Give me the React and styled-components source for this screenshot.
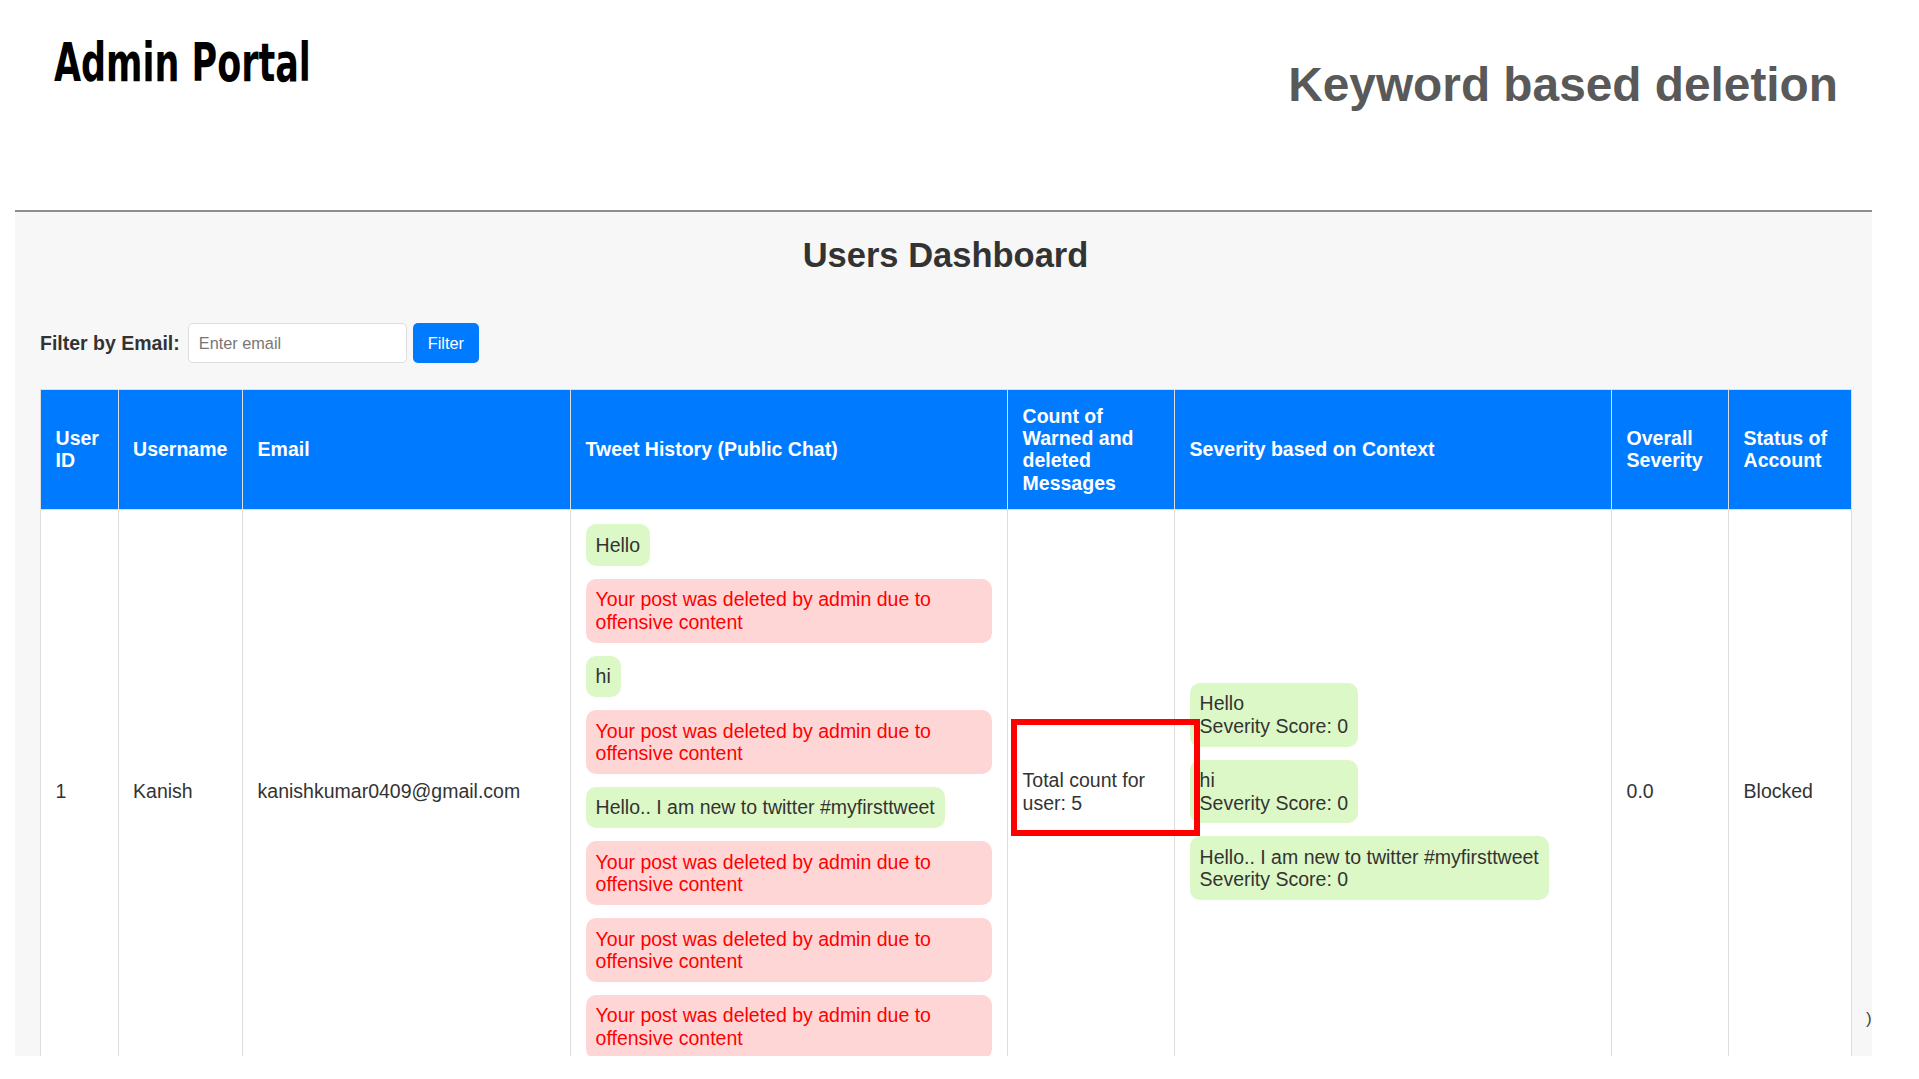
import React from "react";
import styled, { createGlobalStyle } from "styled-components";

const GlobalStyle = createGlobalStyle`
  html, body {
    margin: 0;
    padding: 0;
    background: #fff;
  }
  body {
    font-family: "Liberation Sans", Arial, sans-serif;
  }
`;

const Slide = styled.div`
  position: relative;
  width: 1919px;
  height: 1079px;
  overflow: hidden;
  background: #fff;
`;

const TitleBar = styled.header`
  display: flex;
  justify-content: space-between;
  align-items: flex-start;
  height: 210px;
  padding: 0 81px 0 54px;
  box-sizing: border-box;
`;

// condensed display face: squeeze a heavy sans to the narrow look of the slide title
const PortalTitle = styled.h1`
  margin: 31px 0 0;
  font-family: "DejaVu Sans Condensed", "DejaVu Sans", sans-serif;
  font-weight: 700;
  font-size: 54px;
  line-height: normal;
  color: #000;
  white-space: nowrap;
  transform: scaleX(0.72);
  transform-origin: left center;
`;

const Subject = styled.h2`
  margin: 57px 0 0;
  font-size: 47.8px;
  font-weight: 700;
  line-height: normal;
  color: #595959;
`;

const Screenshot = styled.section`
  position: relative;
  margin-left: 15px;
  width: 1857px;
  height: 846px;
  box-sizing: border-box;
  border-top: 2px solid #8b8f8a;
  background: #f7f7f7;
  padding: 0 21px 0 25px;
  overflow: hidden;
  color: #333;
`;

const DashTitle = styled.h2`
  margin: 23px 0 0;
  text-align: center;
  font-size: 34.5px;
  line-height: 40px;
  font-weight: 700;
  color: #333;
`;

const FilterRow = styled.div`
  display: flex;
  align-items: center;
  height: 40px;
  margin-top: 48px;
`;

const FilterLabel = styled.label`
  font-size: 19.5px;
  font-weight: 700;
  color: #333;
  margin-right: 8px;
`;

const EmailInput = styled.input`
  width: 219px;
  height: 40px;
  box-sizing: border-box;
  border: 1px solid #ddd;
  border-radius: 5px;
  padding: 0 10px;
  font-family: "Liberation Sans", Arial, sans-serif;
  font-size: 16.3px;
  color: #333;
  background: #fff;
  outline: none;

  &::placeholder {
    color: #777;
  }
`;

const FilterButton = styled.button`
  width: 66px;
  height: 40px;
  margin-left: 6px;
  border: none;
  border-radius: 5px;
  background: #007bff;
  color: #fff;
  font-family: "Liberation Sans", Arial, sans-serif;
  font-size: 16.3px;
  padding: 0;
  cursor: pointer;
`;

const Table = styled.table`
  margin-top: 26px;
  width: 1811px;
  border-collapse: collapse;
  table-layout: fixed;
  background: #fff;
  font-size: 19.5px;
`;

const Th = styled.th`
  background: #007bff;
  color: #fff;
  text-align: left;
  font-weight: 700;
  padding: 14.6px;
  border: 1px solid #ddd;
  vertical-align: middle;
  line-height: 22.4px;
`;

const Td = styled.td`
  padding: 14.6px;
  border: 1px solid #ddd;
  vertical-align: middle;
  color: #333;
  line-height: 22.4px;
`;

const Bubble = styled.div`
  width: fit-content;
  max-width: 100%;
  box-sizing: border-box;
  padding: 9.5px 10px;
  border-radius: 10px;
  margin-bottom: 13px;
  background: ${(p) => (p.$deleted ? "#ffd6d6" : "#dcf8c6")};
  color: ${(p) => (p.$deleted ? "#ff0000" : "#333")};

  &:last-child {
    margin-bottom: 0;
  }
`;

const Annotation = styled.div`
  position: absolute;
  left: 996px;
  top: 507px;
  width: 189px;
  height: 117px;
  box-sizing: border-box;
  border: 6px solid #ff0000;
  pointer-events: none;
`;

const EdgeGlyph = styled.span`
  position: absolute;
  left: 1866px;
  top: 1009px;
  font-size: 17px;
  color: #444;
`;

const columns = [77.5, 124.5, 328, 437, 167, 437, 117, 123];

const headers = [
  "User ID",
  "Username",
  "Email",
  "Tweet History (Public Chat)",
  "Count of Warned and deleted Messages",
  "Severity based on Context",
  "Overall Severity",
  "Status of Account",
];

const deletedText = "Your post was deleted by admin due to offensive content";

const tweets = [
  { text: "Hello" },
  { text: deletedText, deleted: true },
  { text: "hi" },
  { text: deletedText, deleted: true },
  { text: "Hello.. I am new to twitter #myfirsttweet" },
  { text: deletedText, deleted: true },
  { text: deletedText, deleted: true },
  { text: deletedText, deleted: true },
];

const severities = [
  { text: "Hello", score: 0 },
  { text: "hi", score: 0 },
  { text: "Hello.. I am new to twitter #myfirsttweet", score: 0 },
];

function App() {
  return (
    <Slide>
      <GlobalStyle />
      <TitleBar>
        <PortalTitle>Admin Portal</PortalTitle>
        <Subject>Keyword based deletion</Subject>
      </TitleBar>

      <Screenshot>
        <DashTitle>Users Dashboard</DashTitle>

        <FilterRow>
          <FilterLabel>Filter by Email:</FilterLabel>
          <EmailInput placeholder="Enter email" />
          <FilterButton>Filter</FilterButton>
        </FilterRow>

        <Table>
          <colgroup>
            {columns.map((w, i) => (
              <col key={i} style={{ width: w }} />
            ))}
          </colgroup>
          <thead>
            <tr>
              {headers.map((h) => (
                <Th key={h}>{h}</Th>
              ))}
            </tr>
          </thead>
          <tbody>
            <tr>
              <Td>1</Td>
              <Td>Kanish</Td>
              <Td>kanishkumar0409@gmail.com</Td>
              <Td>
                {tweets.map((t, i) => (
                  <Bubble key={i} $deleted={t.deleted}>
                    {t.text}
                  </Bubble>
                ))}
              </Td>
              <Td>Total count for user: 5</Td>
              <Td>
                {severities.map((s, i) => (
                  <Bubble key={i}>
                    {s.text}
                    <br />
                    Severity Score: {s.score}
                  </Bubble>
                ))}
              </Td>
              <Td>0.0</Td>
              <Td>Blocked</Td>
            </tr>
          </tbody>
        </Table>

        <Annotation />
      </Screenshot>

      <EdgeGlyph>)</EdgeGlyph>
    </Slide>
  );
}

export default App;
